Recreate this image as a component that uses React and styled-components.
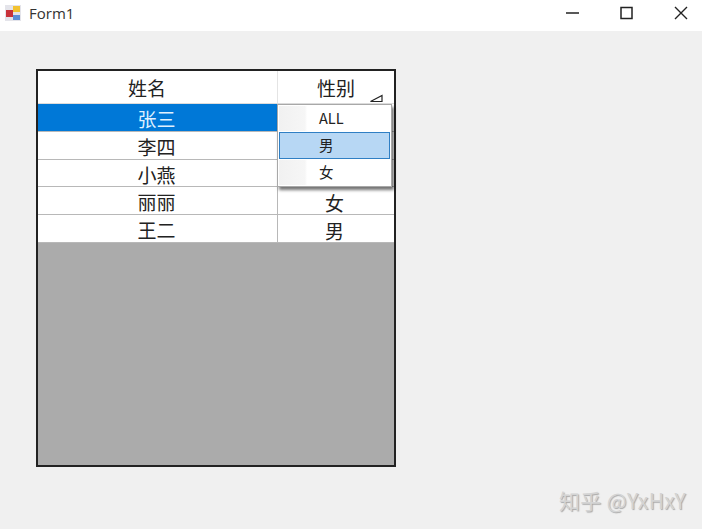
import React from 'react'
import styled, { createGlobalStyle } from 'styled-components'

// the first three sex cells sit under the open filter menu
const rows = [
  { name: '张三', sex: '', selected: true, height: 28 },
  { name: '李四', sex: '', height: 28 },
  { name: '小燕', sex: '', height: 27 },
  { name: '丽丽', sex: '女', height: 28 },
  { name: '王二', sex: '男', height: 28 },
]

const GlobalStyle = createGlobalStyle`
  html, body { margin: 0; padding: 0; background: #f0f0f0; }
  body { font-family: "Liberation Sans", "Noto Sans CJK SC", sans-serif; }
`

const Window = styled.div`
  position: relative;
  width: 702px;
  height: 529px;
  overflow: hidden;
  background: #f0f0f0;
`

const TitleBar = styled.div`
  height: 31px;
  background: #fff;
  display: flex;
  align-items: center;
`

const AppIcon = styled.svg`
  width: 18px;
  height: 18px;
  margin-left: 4px;
  margin-top: -5px;
`

const Title = styled.div`
  margin-left: 7px;
  margin-top: -6px;
  font-family: "Open Sans", "Liberation Sans", sans-serif;
  font-size: 15px;
  color: #333;
  flex: 1;
`

const WinButtons = styled.div`
  display: flex;
  margin-top: -6px;
  margin-right: -6px;
`

const WinButton = styled.svg`
  width: 54px;
  height: 14px;
  display: block;
`

const Grid = styled.div`
  position: relative;
  width: 356px;
  height: 394px;
  margin: 38px 0 0 36px;
  border: 2px solid #222;
  background: #ababab;
`

const Row = styled.div`
  display: grid;
  grid-template-columns: 240px 116px;
  height: ${p => p.$height}px;
  box-sizing: border-box;
  background: #fff;
  border-bottom: 1.5px solid ${p => p.$line};
`

const Cell = styled.div`
  display: flex;
  align-items: center;
  justify-content: center;
  padding: ${p => (p.$last ? 3 : 2)}px ${p => (p.$last ? 3 : 2)}px 0 0;
  font-family: "Noto Sans CJK SC", sans-serif;
  font-size: 19px;
  line-height: 1;
  color: ${p => (p.$selected ? '#dff1ff' : '#222')};
  background: ${p => (p.$selected ? '#0078d7' : '#fff')};
  box-sizing: border-box;
  border-right: ${p => (p.$last ? 'none' : '1.5px solid #b8b8b8')};
`

const HeadCell = styled(Cell)`
  position: relative;
  padding: 1px ${p => (p.$last ? 0 : 21)}px 0 0;
  border-right: ${p => (p.$last ? 'none' : '1px solid #e4e4e4')};
`

const SortGlyph = styled.svg`
  position: absolute;
  right: 10px;
  bottom: -1px;
  width: 15px;
  height: 10px;
`

const Menu = styled.div`
  position: absolute;
  left: 239px;
  top: 33px;
  width: 115px;
  height: 83px;
  box-sizing: border-box;
  padding: 1px;
  background: #fff;
  border: 1px solid #a8a8a8;
  box-shadow: 2px 3px 3px rgba(0, 0, 0, 0.55);
  display: flex;
  flex-direction: column;
`

const MenuItem = styled.div`
  height: ${p => (p.$active ? 27 : 26)}px;
  margin-top: ${p => (p.$active ? 1 : 0)}px;
  margin-bottom: ${p => (p.$active ? 1 : 0)}px;
  padding-bottom: 2px;
  box-sizing: border-box;
  display: flex;
  align-items: center;
  padding-left: ${p => (p.$active ? 39 : 40)}px;
  font-family: "Noto Sans CJK SC", sans-serif;
  font-size: 14.5px;
  color: #222;
  border: ${p => (p.$active ? '1px solid #2f7fc4' : 'none')};
  background: ${p => (p.$active
    ? '#b7d7f4'
    : 'linear-gradient(90deg, #f1f1f1 0, #f6f6f6 26px, #fff 28px)')};
`

const Watermark = styled.div`
  position: absolute;
  right: 16px;
  bottom: 18px;
  font-family: "Noto Sans CJK SC", sans-serif;
  font-size: 21px;
  line-height: 1;
  color: #d4d4d4;
  text-shadow: 1px 1px 1px #a8a8a8;
  letter-spacing: 0.4px;
`

const App = () => {
  return (
    <Window>
      <GlobalStyle />
      <TitleBar>
        <AppIcon viewBox="0 0 18 18">
          <rect x="1" y="1" width="16" height="16" fill="#e4e4ea" />
          <rect x="2" y="6" width="7" height="7" fill="#c8323a" />
          <rect x="9" y="2" width="7" height="6" fill="#f2c230" />
          <rect x="9" y="11" width="7" height="5" fill="#5c8fd6" />
        </AppIcon>
        <Title>Form1</Title>
        <WinButtons>
          <WinButton viewBox="0 0 54 14">
            <path d="M20 7H33" stroke="#222" strokeWidth="1.5" />
          </WinButton>
          <WinButton viewBox="0 0 54 14">
            <rect x="21" y="1.5" width="11" height="11" fill="none" stroke="#222" strokeWidth="1.5" />
          </WinButton>
          <WinButton viewBox="0 0 54 14">
            <path d="M21 1L33 13M33 1L21 13" stroke="#222" strokeWidth="1.4" />
          </WinButton>
        </WinButtons>
      </TitleBar>

      <Grid>
        <Row $height={33} $line="#dcdcdc">
          <HeadCell>姓名</HeadCell>
          <HeadCell $last>
            性别
            <SortGlyph viewBox="0 0 15 10">
              <path d="M1.5 7.5L13 1.5V7.5Z" fill="none" stroke="#222" strokeWidth="1.2" />
            </SortGlyph>
          </HeadCell>
        </Row>
        {rows.map(row => (
          <Row key={row.name} $height={row.height} $line="#b8b8b8">
            <Cell $selected={row.selected}>{row.name}</Cell>
            <Cell $last>{row.sex}</Cell>
          </Row>
        ))}
        <Menu>
          <MenuItem>ALL</MenuItem>
          <MenuItem $active>男</MenuItem>
          <MenuItem>女</MenuItem>
        </Menu>
      </Grid>

      <Watermark>知乎 @YxHxY</Watermark>
    </Window>
  )
}

export default App
